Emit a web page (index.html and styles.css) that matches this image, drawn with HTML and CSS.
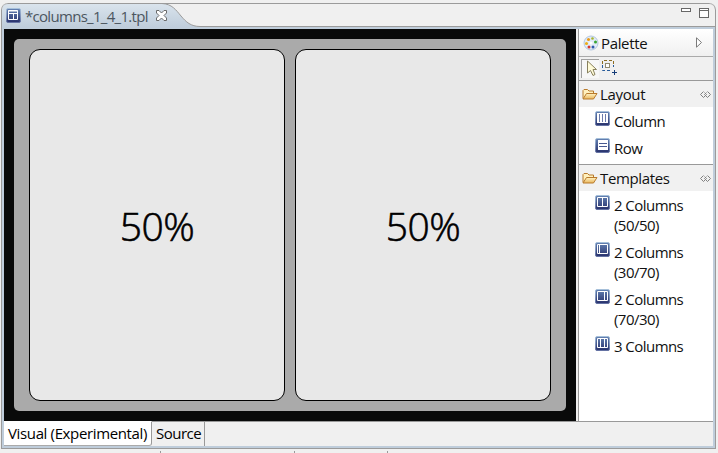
FILE: index.html
```
<!DOCTYPE html>
<html lang="en">
<head>
<meta charset="utf-8">
<title>columns_1_4_1.tpl</title>
<link rel="stylesheet" href="styles.css">
</head>
<body>
<svg width="0" height="0" class="defs">
  <defs>
    <linearGradient id="navy" x1="0" y1="0" x2="0" y2="1"><stop offset="0" stop-color="#6583b4"/><stop offset="1" stop-color="#28316c"/></linearGradient>
    <linearGradient id="edge" x1="0" y1="0" x2="0" y2="1"><stop offset="0" stop-color="#a6c0da"/><stop offset="1" stop-color="#6472a3"/></linearGradient>
    <linearGradient id="tabfill" x1="0" y1="0" x2="0" y2="1"><stop offset="0" stop-color="#dae4ed"/><stop offset="1" stop-color="#bfcddb"/></linearGradient>
    <linearGradient id="gold" x1="0" y1="0" x2="0" y2="1"><stop offset="0" stop-color="#fff3c4"/><stop offset="1" stop-color="#e9b65c"/></linearGradient>
    <symbol id="tile" viewBox="0 0 15 15"><rect x=".5" y=".5" width="14" height="14" rx="1.5" fill="url(#navy)" stroke="url(#edge)"/></symbol>
    <symbol id="folder" viewBox="0 0 16 12">
      <path d="M1 10.5V2.5L2 1.5H5.5L7 3H11.5V5.5" fill="#fff0bd" stroke="#b87a2d"/>
      <path d="M1 11L4.5 5.5H15L11.5 11Z" fill="url(#gold)" stroke="#b87a2d"/>
    </symbol>
    <symbol id="pin" viewBox="0 0 11 7"><path d="M3.5 .5L.5 3.5L3.5 6.5L6.5 3.5L4.5 1.5M7.5 .5L10.5 3.5L7.5 6.5L4.5 3.5L6.5 1.5" fill="none" stroke="#808080"/></symbol>
  </defs>
</svg>
<div class="frame">
  <div class="strip">
    <div class="tab">
      <svg class="ico" width="15" height="15"><use href="#tile"/><path d="M2.500 2.500V11.500H11.500V2.500ZM2 3H12M2 5.500H12M7.500 5V12" fill="none" stroke="#fff"/></svg>
      <span class="title">*columns_1_4_1.tpl</span>
      <svg class="close" width="11" height="11"><path d="M.5 .5H3L5.500 3L8 .5H10.500V3L8 5.500L10.500 8V10.500H8L5.500 8L3 10.500H.5V8L3 5.500L.5 3V.5Z" fill="#fff" stroke="#6b6b6b"/></svg>
    </div>
    <svg class="curve" width="43" height="24"><path d="M0 0H2C12 1 16 7 21 13S31 23.500 40 23.500H43V24H0Z" fill="url(#tabfill)"/><path d="M0 .5H43M0 .5H2C12 1 16 7 21 13S31 23.500 40 23.500H43" fill="none" stroke="#9b9b9b"/></svg>
    <div class="rest">
      <svg width="30" height="13"><rect x=".5" y="1.500" width="9" height="3" fill="#fff" stroke="#686868"/><rect x="18.500" y="1.500" width="9" height="9" fill="#fff" stroke="#686868"/><path d="M18 3.500H28" stroke="#686868"/></svg>
    </div>
  </div>
  <div class="editor">
    <div class="work">
      <div class="canvas"><div class="row"><div class="col"><span>50%</span></div><div class="col"><span>50%</span></div></div></div>
      <div class="palette">
        <div class="phead">
          <svg width="16" height="16"><circle cx="8" cy="8" r="7" fill="#e1ebf7" stroke="#b2c6de"/><circle cx="5.500" cy="4.500" r="1.500" fill="#e99a18"/><circle cx="9.500" cy="3.500" r="1.300" fill="#a8b52b"/><circle cx="12.500" cy="7" r="1.500" fill="#37a532"/><circle cx="3.500" cy="8.500" r="1.500" fill="#edae16"/><circle cx="6" cy="12" r="1.500" fill="#d6382e"/><circle cx="10" cy="12" r="1.500" fill="#305aac"/><circle cx="8" cy="8" r="1.600" fill="#fff"/></svg>
          <span>Palette</span>
          <svg class="arrow" width="7" height="11"><path d="M.5 .8V10.200L5.500 5.500Z" fill="#fff" stroke="#7a7a7a"/></svg>
        </div>
        <div class="tools">
          <div class="tool"><svg width="12" height="17"><path d="M1.500 1V13L4.500 10.500L7 15.500L9 14.500L7 9.500H10.500Z" fill="#fffbd8" stroke="#88815e"/></svg></div>
          <svg class="marquee" width="16" height="16"><path d="M.5 4V.5H11.500V4" fill="none" stroke="#8c6d20" stroke-dasharray="3 2"/><path d="M.5 5V10.500H9M11.500 5V7" fill="none" stroke="#285c9a" stroke-dasharray="3 2"/><rect x="3.500" y="3.500" width="4" height="4" fill="#fff" stroke="#918b6e"/><path d="M12.500 10V15M10 12.500H15" stroke="#163e79"/></svg>
        </div>
        <div class="group">
          <div class="ghead"><svg width="16" height="12"><use href="#folder"/></svg><span>Layout</span><svg class="pin" width="11" height="7"><use href="#pin"/></svg></div>
          <div class="item"><svg width="15" height="15"><use href="#tile"/><path d="M2 2H13V12H2Z" fill="#fff"/><path d="M4.500 3V11M7.500 3V11M10.500 3V11" stroke="#6b7bac"/></svg><span>Column</span></div>
          <div class="item"><svg width="15" height="15"><use href="#tile"/><path d="M3 2H13V12H3Z" fill="#fff"/><path d="M4 5.500H12M4 8.500H12" stroke="#485a91"/></svg><span>Row</span></div>
        </div>
        <div class="group">
          <div class="ghead"><svg width="16" height="12"><use href="#folder"/></svg><span>Templates</span><svg class="pin" width="11" height="7"><use href="#pin"/></svg></div>
          <div class="item"><svg width="15" height="15"><use href="#tile"/><path d="M2.500 2.500H12.500V11.500H2.500ZM7.500 3V12" fill="none" stroke="#fff"/></svg><span>2 Columns<br>(50/50)</span></div>
          <div class="item"><svg width="15" height="15"><use href="#tile"/><path d="M2.500 2.500H12.500V11.500H2.500ZM4.500 3V12" fill="none" stroke="#fff"/></svg><span>2 Columns<br>(30/70)</span></div>
          <div class="item"><svg width="15" height="15"><use href="#tile"/><path d="M2.500 2.500H12.500V11.500H2.500ZM9.500 3V12" fill="none" stroke="#fff"/></svg><span>2 Columns<br>(70/30)</span></div>
          <div class="item"><svg width="15" height="15"><use href="#tile"/><path d="M2.500 2.500H12.500V11.500H2.500ZM5.500 3V12M9.500 3V12" fill="none" stroke="#fff"/></svg><span>3 Columns</span></div>
        </div>
      </div>
    </div>
    <div class="pages"><div class="page on"><span>Visual (Experimental)</span></div><div class="page"><span>Source</span></div></div>
  </div>
</div>
<div class="status"><i></i><i></i><i></i></div>
</body>
</html>
```
FILE: styles.css
```
* { box-sizing: border-box; }
body { margin: 0; width: 718px; height: 453px; overflow: hidden; background: #f0f0f0; font: 15px/20px "Open Sans", "Noto Sans", sans-serif; letter-spacing: -0.35px; color: #111; }
svg { display: block; flex: none; }
.defs { position: absolute; }
.frame { margin: 3px 0 0 1px; width: 715px; height: 446px; border: 1px solid #9b9b9b; border-top: 0; border-radius: 7px 7px 0 0; overflow: hidden; display: flex; flex-direction: column; }
.strip { height: 24px; flex: none; display: flex; }
.tab { width: 158px; height: 24px; flex: none; border-top: 1px solid #9b9b9b; border-radius: 6px 0 0 0; background: linear-gradient(#dae4ed, #bfcddb); display: flex; padding-left: 4px; white-space: nowrap; }
.tab .ico { margin-top: 4px; }
.title { flex: none; margin-left: 4px; width: 127px; line-height: 24px; color: #4c5660; letter-spacing: -0.7px; }
.close { margin-top: 6px; margin-left: 4px; position: relative; z-index: 1; }
.rest { flex: 1; border: solid #9b9b9b; border-width: 1px 0; border-radius: 0 6px 0 0; display: flex; justify-content: flex-end; padding: 3px 4px 0 0; }
.editor { flex: 1; min-height: 0; border: 2px solid #bfcddb; display: flex; flex-direction: column; }
.work { height: 392px; flex: none; display: flex; }
.canvas { width: 572px; flex: none; background: #090a0a; padding: 10px; }
.row { height: 372px; background: #aaa; border-radius: 5px; display: flex; gap: 10px; padding: 10px 15px; }
.col { width: 256px; height: 352px; border: 1px solid #000; border-radius: 11px; background: #e8e8e8; padding-top: 2px; font-size: 39px; font-weight: 300; -webkit-text-stroke: 0.6px #000; letter-spacing: -0.5px; display: flex; align-items: center; justify-content: center; color: #000; }
.palette { flex: 1; margin-left: 2px; border-left: 1px solid #999; background: #fff; }
.phead { height: 28px; border-bottom: 1px solid #aaa; background: linear-gradient(#fff, #f0f0f0); display: flex; align-items: center; padding: 0 10px 0 4px; }
.phead span { margin-left: 2px; }
.arrow { margin-left: auto; }
.tools { height: 23px; background: #f0f0f0; display: flex; padding: 2px; }
.tool { width: 18px; height: 19px; border: solid #a0a0a0; border-width: 1px 0 0 1px; background: #f7f7f7; padding: 0 0 0 4px; }
.marquee { margin: 1px 0 0 3px; }
.ghead { height: 27px; border-top: 1px solid #999; background: #f1f1f1; display: flex; align-items: center; padding: 0 2px 0 3px; }
.ghead span { margin-left: 2px; }
.pin { margin-left: auto; }
.item { display: flex; padding: 4px 0 3px 16px; letter-spacing: -0.55px; }
.item span { margin-left: 4px; }
.group:nth-child(3) { height: 84px; }
.pages { flex: 1; background: #f0f0f0; display: flex; color: #000; }
.page { border: solid #999; border-width: 1px 1px 0 0; padding-left: 4px; line-height: 23px; white-space: nowrap; width: 53px; height: 25px; letter-spacing: -0.5px; }
.page.on { width: 148px; letter-spacing: -0.36px; background: #fff; border-top-color: #fff; border-bottom: 1px solid #aaa; border-bottom-right-radius: 3px; }
.pages::after { content: ""; flex: 1; border-top: 1px solid #999; }
.status { display: flex; height: 4px; padding-top: 2px; }
.status i { width: 1px; height: 2px; background: #999; margin-left: 160px; }
.status i + i { margin-left: 133px; }
.status i:last-child { margin-left: 92px; }
```
